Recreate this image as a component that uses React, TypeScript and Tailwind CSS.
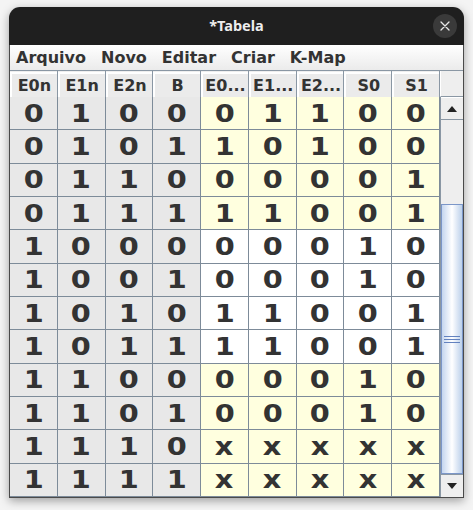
import React from "react";

const headers = ["E0n", "E1n", "E2n", "B", "E0...", "E1...", "E2...", "S0", "S1"];
const rows = [
  "010001100",
  "010110100",
  "011000001",
  "011111001",
  "100000010",
  "100100010",
  "101011001",
  "101111001",
  "110000010",
  "110100010",
  "1110xxxxx",
  "1111xxxxx",
];

export default function App() {
  return (
    <div className="w-[473px] h-[510px] bg-[#f4f4f4] pt-[7px] pl-[9px] overflow-hidden">
      <div
        className="w-[455px] rounded-t-[11px] shadow-[0_3px_10px_rgba(0,0,0,0.35)] bg-[#eeeeee] overflow-hidden"
        style={{ fontFamily: '"DejaVu Sans", sans-serif' }}
      >
        {/* Title bar */}
        <div className="relative h-[38px] bg-[#1f1f1f] flex items-center justify-center">
          <span
            className="text-[14.5px] font-bold text-[#ededed]"
            style={{ fontFamily: '"Noto Sans", sans-serif' }}
          >
            *Tabela
          </span>
          <div className="absolute right-[7px] top-[7px] w-[24px] h-[24px] rounded-full bg-[#3a3a3a] flex items-center justify-center">
            <svg width="10" height="10" viewBox="0 0 10 10">
              <path d="M1 1L9 9M9 1L1 9" stroke="#e8e8e8" strokeWidth="1.3" strokeLinecap="round" />
            </svg>
          </div>
        </div>
        <div className="border-x border-b border-[#4a4a4a]">
          {/* Menu bar */}
          <div className="h-[25px] bg-gradient-to-b from-white to-[#ebebeb] flex items-center pl-[6px] gap-[15px] text-[16px] font-bold text-[#333333]">
            <span>Arquivo</span>
            <span>Novo</span>
            <span>Editar</span>
            <span>Criar</span>
            <span>K-Map</span>
          </div>
          {/* Header */}
          <div className="h-[27px] flex border-t border-[#8a97a4] bg-[#eeeeee]">
            <div className="flex-1 grid grid-cols-[repeat(9,minmax(0,1fr))]">
              {headers.map((h, i) => (
                <div key={i} className="border-r border-b border-[#8a97a4] flex">
                  <div className="flex-1 border-t-2 border-l-2 border-white flex items-center justify-center text-[16px] font-bold text-[#333333] mt-[1px] bg-[#ebebeb]">
                    {h}
                  </div>
                </div>
              ))}
            </div>
            <div className="w-[23px] border-b border-[#8a97a4] bg-[#eeeeee] border-l border-l-white"></div>
          </div>
          {/* Body */}
          <div className="flex h-[400px]">
            <div className="flex-1 grid grid-cols-[repeat(9,minmax(0,1fr))] grid-rows-[repeat(12,minmax(0,1fr))]">
              {rows.map((r, ri) =>
                r.split("").map((c, ci) => {
                  const bg =
                    ci < 4
                      ? "bg-[#e8e8e8]"
                      : ri >= 4 && ri <= 7
                      ? "bg-white"
                      : "bg-[#ffffdf]";
                  return (
                    <div
                      key={ri + "-" + ci}
                      className={`${bg} border-r border-b border-[#7d8b99] flex items-center justify-center`}
                    >
                      <span className="inline-block scale-x-[1.15] text-[25px] leading-none font-bold text-[#333333]">
                        {c}
                      </span>
                    </div>
                  );
                })
              )}
            </div>
            {/* Scrollbar */}
            <div className="w-[23px] flex flex-col bg-[#eeeeee] border-l border-[#8a97a4]">
              <div className="h-[23px] border-b border-[#8a97a4] border-t border-t-white flex items-center justify-center bg-[#eeeeee]">
                <svg width="10" height="6" viewBox="0 0 10 6">
                  <path d="M0 6L5 0L10 6Z" fill="#222" />
                </svg>
              </div>
              <div className="h-[84px]"></div>
              <div className="h-[270px] border border-[#7b96c8] bg-gradient-to-r from-[#c5d6ef] via-white to-[#bcd0ea] flex flex-col items-center justify-center gap-[2px]">
                <div className="w-[16px] h-[1px] bg-[#6382bf]"></div>
                <div className="w-[16px] h-[1px] bg-[#6382bf]"></div>
                <div className="w-[16px] h-[1px] bg-[#6382bf]"></div>
              </div>
              <div className="flex-1 border-t border-[#8a97a4] flex items-center justify-center bg-[#eeeeee]">
                <svg width="10" height="6" viewBox="0 0 10 6">
                  <path d="M0 0L10 0L5 6Z" fill="#222" />
                </svg>
              </div>
            </div>
          </div>
        </div>
      </div>
    </div>
  );
}
